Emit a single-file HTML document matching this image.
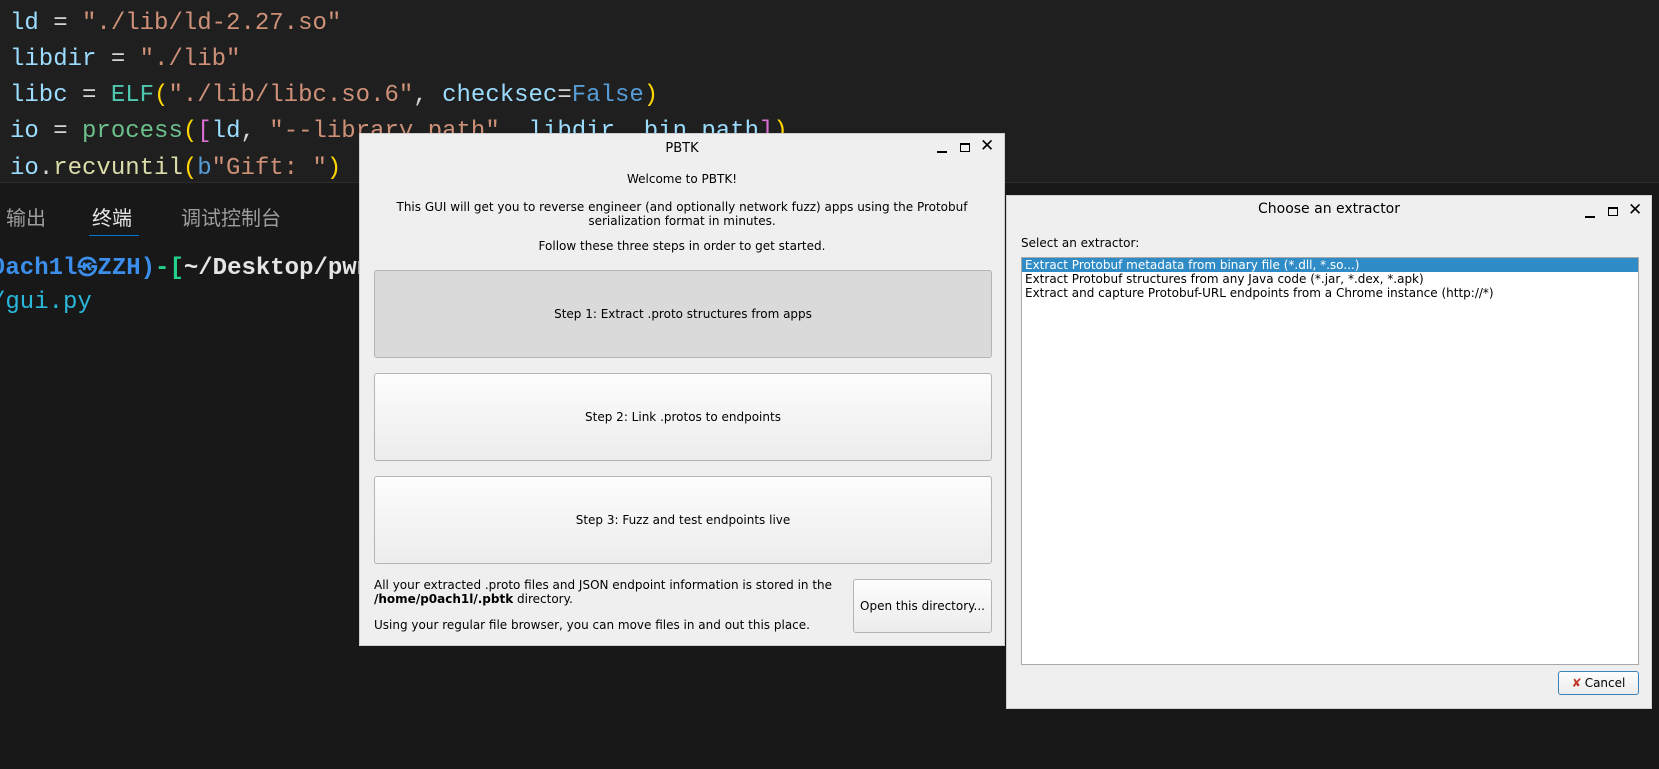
<!DOCTYPE html>
<html><head><meta charset="utf-8"><style>
*{margin:0;padding:0;box-sizing:border-box}
body{width:1659px;height:769px;background:#1f1f1f;position:relative;overflow:hidden;font-family:"DejaVu Sans",sans-serif;}
.code{position:absolute;left:10px;font-family:"Liberation Mono",monospace;font-size:24px;white-space:pre;color:#9cdcfe;line-height:36px}
.s{color:#ce9178}.f{color:#4ec9b0}.g{color:#6cc08b}.y{color:#dcdcaa}.k{color:#569cd6}.w{color:#d4d4d4}.b1{color:#ffd700}.b2{color:#da70d6}.b3{color:#179fff}
.panel{position:absolute;left:0;top:182px;width:1659px;height:587px;background:#181818;border-top:1px solid #2b2b2b}
.tab{position:absolute;top:202px;font-family:"Liberation Sans","Noto Sans CJK SC",sans-serif;font-size:20px;color:#9d9d9d}
.term{position:absolute;font-family:"Liberation Mono",monospace;font-size:24px;white-space:pre;line-height:34px}
.win{position:absolute;background:#efefef;border:1px solid #cfcfcf;color:#000;font-size:12px}
.ctl{position:absolute;font-size:13px}
.btn{position:absolute;border:1px solid #b4b4b4;border-radius:3px;background:linear-gradient(#fdfdfd,#ececec);display:flex;align-items:center;justify-content:center;font-size:12px}
.c{position:absolute;left:0;right:0;text-align:center}
.list{position:absolute;background:#fff;border:1px solid #a8a8a8}
.list div{height:14px;line-height:14px;padding-left:3px;font-size:12px;white-space:nowrap}
</style></head><body>
<div class="code" style="top:6px"><span>ld</span><span class="w"> = </span><span class="s">"./lib/ld-2.27.so"</span></div>
<div class="code" style="top:42px">libdir<span class="w"> = </span><span class="s">"./lib"</span></div>
<div class="code" style="top:78px">libc<span class="w"> = </span><span class="f">ELF</span><span class="b1">(</span><span class="s">"./lib/libc.so.6"</span><span class="w">, </span>checksec<span class="w">=</span><span class="k">False</span><span class="b1">)</span></div>
<div class="code" style="top:114px">io<span class="w"> = </span><span class="g">process</span><span class="b1">(</span><span class="b2">[</span>ld<span class="w">, </span><span class="s">"--library_path"</span><span class="w">, </span>libdir<span class="w">, </span>bin_path<span class="b2">]</span><span class="b1">)</span></div>
<div class="code" style="top:151px">io<span class="w">.</span><span class="y">recvuntil</span><span class="b1">(</span><span class="k">b</span><span class="s">"Gift: "</span><span class="b1">)</span></div>
<div class="panel"></div>
<div class="tab" style="left:6px">输出</div>
<div class="tab" style="left:92px;color:#e7e7e7">终端</div>
<div style="position:absolute;left:89px;top:235px;width:50px;height:1px;background:#0078d4"></div>
<div class="tab" style="left:181px">调试控制台</div>
<div class="term" style="left:-9px;top:252px;font-weight:bold"><span style="color:#3b8eea">0ach1l<span style="font-size:20px">㉿</span>ZZH</span><span style="color:#3b8eea">)</span><span style="color:#23d18b">-[</span><span style="color:#e5e5e5">~/Desktop/pwn</span></div>
<div class="term" style="left:-9px;top:286px;color:#29b8db">/gui.py</div>

<div class="win" style="left:359px;top:133px;width:646px;height:513px">
 <div class="c" style="top:7px;font-size:13px">PBTK</div>
 <div style="position:absolute;left:577px;top:17px;width:10px;height:2px;background:#000"></div>
 <div style="position:absolute;left:600px;top:9px;width:10px;height:9px;border:1.5px solid #000;border-top-width:2.5px"></div>
 <div class="ctl" style="left:620px;top:2px;font-size:17px;font-weight:bold">✕</div>
 <div class="c" style="top:38px">Welcome to PBTK!</div>
 <div class="c" style="top:66px;line-height:14px">This GUI will get you to reverse engineer (and optionally network fuzz) apps using the Protobuf<br>serialization format in minutes.</div>
 <div class="c" style="top:105px">Follow these three steps in order to get started.</div>
 <div class="btn" style="left:14px;top:136px;width:618px;height:88px;background:#dadada">Step 1: Extract .proto structures from apps</div>
 <div class="btn" style="left:14px;top:239px;width:618px;height:88px">Step 2: Link .protos to endpoints</div>
 <div class="btn" style="left:14px;top:342px;width:618px;height:88px">Step 3: Fuzz and test endpoints live</div>
 <div style="position:absolute;left:14px;top:444px;line-height:14px">All your extracted .proto files and JSON endpoint information is stored in the<br><b>/home/p0ach1l/.pbtk</b> directory.</div>
 <div style="position:absolute;left:14px;top:484px">Using your regular file browser, you can move files in and out this place.</div>
 <div class="btn" style="left:493px;top:445px;width:139px;height:54px">Open this directory...</div>
</div>

<div class="win" style="left:1006px;top:195px;width:646px;height:514px">
 <div class="c" style="top:5px;font-size:14px">Choose an extractor</div>
 <div style="position:absolute;left:578px;top:20px;width:10px;height:2px;background:#000"></div>
 <div style="position:absolute;left:601px;top:11px;width:10px;height:9px;border:1.5px solid #000;border-top-width:2.5px"></div>
 <div class="ctl" style="left:621px;top:4px;font-size:17px;font-weight:bold">✕</div>
 <div style="position:absolute;left:14px;top:40px">Select an extractor:</div>
 <div class="list" style="left:14px;top:61px;width:618px;height:408px">
  <div style="background:#308cc6;color:#fff">Extract Protobuf metadata from binary file (*.dll, *.so...)</div>
  <div>Extract Protobuf structures from any Java code (*.jar, *.dex, *.apk)</div>
  <div>Extract and capture Protobuf-URL endpoints from a Chrome instance (http://*)</div>
 </div>
 <div class="btn" style="left:551px;top:475px;width:81px;height:24px;border-color:#3a82b8"><span style="color:#c0392b;font-weight:bold;margin-right:3px">✘</span>Cancel</div>
</div>
</body></html>
